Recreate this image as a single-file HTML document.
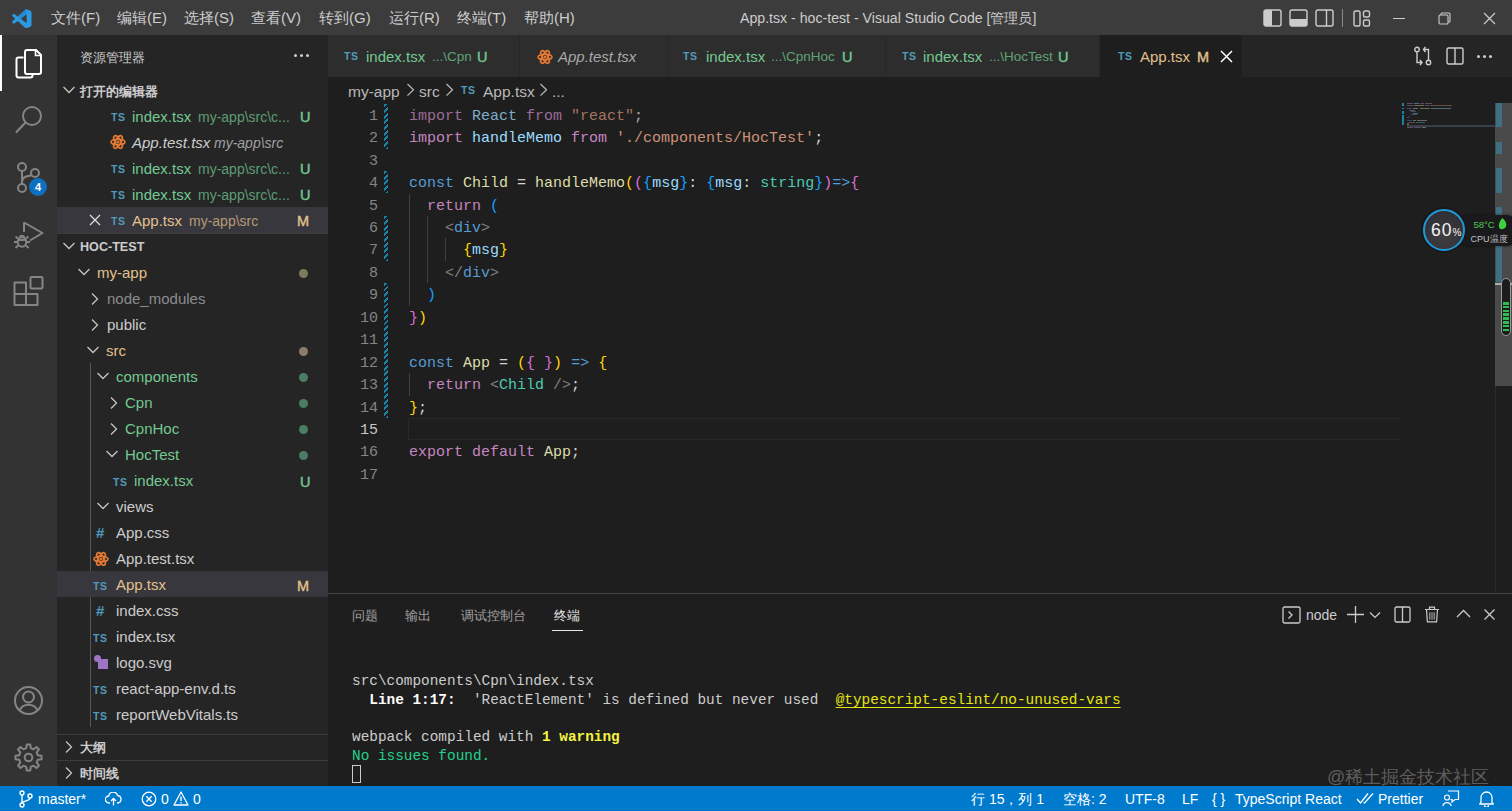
<!DOCTYPE html>
<html><head><meta charset="utf-8">
<style>
*{margin:0;padding:0;box-sizing:border-box}
html,body{width:1512px;height:811px;overflow:hidden;background:#1e1e1e;font-family:"Liberation Sans",sans-serif;color:#cccccc}
.a{position:absolute}
#title{left:0;top:0;width:1512px;height:35px;background:#3c3c3c}
#act{left:0;top:35px;width:57px;height:751px;background:#333333}
#side{left:57px;top:35px;width:271px;height:751px;background:#252526}
#tabs{left:328px;top:35px;width:1184px;height:43px;background:#252526}
#editor{left:328px;top:78px;width:1184px;height:516px;background:#1e1e1e}
#panel{left:328px;top:593px;width:1184px;height:193px;background:#1e1e1e;border-top:1px solid #454545}
#status{left:0;top:786px;width:1512px;height:25px;background:#007acc}
.menu{top:8px;font-size:15px;line-height:20px;white-space:nowrap;color:#cccccc}
.st{font-size:15px;line-height:20px;white-space:nowrap}
.ts{font-size:10.5px;font-weight:bold;color:#519aba;line-height:16px;letter-spacing:.6px}
.hash{font-size:15px;font-weight:bold;color:#519aba;line-height:18px}
.ln{padding-top:2px;left:340px;width:38px;text-align:right;font-size:15px;line-height:22.45px}
.code{padding-top:2px;left:409px;font-size:15px;line-height:22.45px;white-space:pre;color:#d4d4d4}
.gut{width:4px;background:repeating-linear-gradient(-45deg,#1b81a8 0 2px,transparent 2px 4px)}
.term{padding-top:1.5px;left:352px;font-size:14.4px;line-height:18.9px;white-space:pre;color:#cccccc}
.sb{top:789px;font-size:14px;line-height:21px;color:#ffffff;white-space:nowrap}
.mono{font-family:"Liberation Mono",monospace}
</style></head><body>
<div id="title" class="a">
<svg class="a" style="left:12px;top:8.5px" width="19.5" height="19.5" viewBox="0 0 100 100"><path fill="#2b9ae3" fill-rule="evenodd" d="M96.46 10.8 75.86.9C73.47-.25 70.62.24 68.75 2.1L29.34 38.06 12.17 25.03a4.2 4.2 0 0 0-5.35.24L1.3 30.29a4.2 4.2 0 0 0 0 6.2L16.22 50 1.3 63.51a4.2 4.2 0 0 0 0 6.2l5.52 5.02a4.2 4.2 0 0 0 5.35.24l17.17-13.03 39.41 35.96a6.25 6.25 0 0 0 7.11 1.2l20.6-9.92a6.25 6.25 0 0 0 3.54-5.63V16.43a6.25 6.25 0 0 0-3.54-5.63zM75.02 72.7 45.11 50l29.91-22.7z"/><path fill="#1e7fc4" d="M68.75 2.1 29.34 38.06 45.11 50 75.02 27.3V.6c-2-.6-4.6-.2-6.27 1.5z" opacity=".55"/></svg>
<div class="a menu" style="left:51px">文件(F)</div>
<div class="a menu" style="left:117px">编辑(E)</div>
<div class="a menu" style="left:184px">选择(S)</div>
<div class="a menu" style="left:251px">查看(V)</div>
<div class="a menu" style="left:319px">转到(G)</div>
<div class="a menu" style="left:389px">运行(R)</div>
<div class="a menu" style="left:457px">终端(T)</div>
<div class="a menu" style="left:524px">帮助(H)</div>
<div class="a menu" style="left:740px;font-size:14.15px">App.tsx - hoc-test - Visual Studio Code [管理员]</div>
<svg class="a" style="left:1263px;top:9px" width="19" height="18" viewBox="0 0 19 18"><rect x="1" y="1" width="17" height="16" rx="2" fill="none" stroke="#cccccc" stroke-width="1.4"/><rect x="1" y="1" width="8" height="16" rx="1" fill="#cccccc"/></svg>
<svg class="a" style="left:1289px;top:9px" width="19" height="18" viewBox="0 0 19 18"><rect x="1" y="1" width="17" height="16" rx="2" fill="none" stroke="#cccccc" stroke-width="1.4"/><rect x="1" y="10" width="17" height="7" rx="1" fill="#cccccc"/></svg>
<svg class="a" style="left:1315px;top:9px" width="19" height="18" viewBox="0 0 19 18"><rect x="1" y="1" width="17" height="16" rx="2" fill="none" stroke="#cccccc" stroke-width="1.4"/><line x1="11.5" y1="1" x2="11.5" y2="17" stroke="#cccccc" stroke-width="1.4"/></svg>
<div class="a" style="left:1342px;top:9px;width:1px;height:18px;background:#8a8a8a"></div>
<svg class="a" style="left:1353px;top:10px" width="18" height="17" viewBox="0 0 18 17"><rect x="1" y="1" width="6" height="15" rx="1.5" fill="none" stroke="#cccccc" stroke-width="1.4"/><rect x="10.5" y="1" width="6" height="6" rx="1.5" fill="none" stroke="#cccccc" stroke-width="1.4"/><rect x="10.5" y="10" width="6" height="6" rx="1.5" fill="none" stroke="#cccccc" stroke-width="1.4"/></svg>
<div class="a" style="left:1393px;top:18px;width:12px;height:1px;background:#cccccc"></div>
<svg class="a" style="left:1438px;top:12px" width="13" height="13" viewBox="0 0 13 13"><rect x="1" y="3" width="9" height="9" rx="1" fill="none" stroke="#cccccc" stroke-width="1.1"/><path d="M3 3V2a1 1 0 0 1 1-1h7a1 1 0 0 1 1 1v7a1 1 0 0 1-1 1h-1" fill="none" stroke="#cccccc" stroke-width="1.1"/></svg>
<svg class="a" style="left:1483px;top:12px" width="13" height="13" viewBox="0 0 13 13"><path d="M1 1L12 12M12 1L1 12" stroke="#cccccc" stroke-width="1.2"/></svg>
</div>
<div id="act" class="a">
<div class="a" style="left:0;top:0;width:2px;height:56px;background:#ffffff"></div>
<svg class="a" style="left:14px;top:13px" width="29" height="32" viewBox="0 0 29 32"><path d="M9.5 9.5H4.5a2 2 0 0 0-2 2v16a2 2 0 0 0 2 2h12a2 2 0 0 0 2-2v-1" fill="none" stroke="#ffffff" stroke-width="2"/><path d="M11 4a2 2 0 0 1 2-2h9l5 5v17a2 2 0 0 1-2 2H13a2 2 0 0 1-2-2z" fill="none" stroke="#ffffff" stroke-width="2"/><path d="M21.5 2.5v5h5" fill="none" stroke="#ffffff" stroke-width="1.6"/></svg>
<svg class="a" style="left:14px;top:69px" width="30" height="32" viewBox="0 0 30 32"><circle cx="18" cy="12" r="9" fill="none" stroke="#858585" stroke-width="2"/><path d="M11.5 18.5 2 28.5" stroke="#858585" stroke-width="2.2"/></svg>
<svg class="a" style="left:14px;top:125px" width="28" height="34" viewBox="0 0 28 34"><circle cx="8" cy="7" r="4" fill="none" stroke="#858585" stroke-width="2"/><circle cx="21" cy="13" r="4" fill="none" stroke="#858585" stroke-width="2"/><circle cx="8" cy="28" r="4" fill="none" stroke="#858585" stroke-width="2"/><path d="M8 11v13M8 22c0-4 4-6 9-6.5" fill="none" stroke="#858585" stroke-width="2"/></svg>
<div class="a" style="left:29px;top:143px;width:18px;height:18px;border-radius:50%;background:#0e70c0;color:#fff;font-size:11px;font-weight:bold;line-height:18px;text-align:center">4</div>
<svg class="a" style="left:13px;top:183px" width="32" height="32" viewBox="0 0 32 32"><path d="M11 4.5V14M11 4.5 29.5 15 17 22.5" fill="none" stroke="#858585" stroke-width="2" stroke-linejoin="round"/><ellipse cx="9" cy="24" rx="4.3" ry="4.8" fill="none" stroke="#858585" stroke-width="2"/><path d="M4.5 24H1M13.5 24H17M5 20.5 2.5 18.5M13 20.5l2.5-2M5 27.5 2.5 30M13 27.5l2.5 2.5M5.5 22h7M6.5 19a3 3 0 0 1 5 0" fill="none" stroke="#858585" stroke-width="1.8"/></svg>
<svg class="a" style="left:13px;top:239px" width="32" height="34" viewBox="0 0 32 34"><path d="M1.5 8.5H13V31H1.5zM1.5 20H24.5V31H13" fill="none" stroke="#858585" stroke-width="2" stroke-linejoin="round"/><rect x="17.5" y="3" width="12" height="11.5" rx="1" fill="none" stroke="#858585" stroke-width="2"/></svg>
<svg class="a" style="left:13px;top:650px" width="31" height="31" viewBox="0 0 31 31"><circle cx="15.5" cy="15.5" r="13.5" fill="none" stroke="#858585" stroke-width="2"/><circle cx="15.5" cy="12" r="5.5" fill="none" stroke="#858585" stroke-width="2"/><path d="M6.5 25.5a10 10 0 0 1 18 0" fill="none" stroke="#858585" stroke-width="2"/></svg>
<svg class="a" style="left:13px;top:707px" width="31" height="31" viewBox="0 0 31 31"><path fill="none" stroke="#858585" stroke-width="2" stroke-linejoin="round" d="M28.58 13.74 L28.58 17.26 L24.83 17.74 L23.69 20.52 L25.99 23.51 L23.51 25.99 L20.52 23.69 L17.74 24.83 L17.26 28.58 L13.74 28.58 L13.26 24.83 L10.48 23.69 L7.49 25.99 L5.01 23.51 L7.31 20.52 L6.17 17.74 L2.42 17.26 L2.42 13.74 L6.17 13.26 L7.31 10.48 L5.01 7.49 L7.49 5.01 L10.48 7.31 L13.26 6.17 L13.74 2.42 L17.26 2.42 L17.74 6.17 L20.52 7.31 L23.51 5.01 L25.99 7.49 L23.69 10.48 L24.83 13.26Z"/><circle cx="15.5" cy="15.5" r="3.8" fill="none" stroke="#858585" stroke-width="2"/></svg>
</div>
<div id="side">
<div class="a" style="left:57px;top:35px;width:271px;height:751px;background:#252526"></div>
<div class="a st" style="left:80px;top:48px;color:#cccccc;font-size:13.25px">资源管理器</div>
<div class="a" style="left:294px;top:54px;width:3px;height:3px;border-radius:50%;background:#ccc;box-shadow:6px 0 0 #ccc,12px 0 0 #ccc"></div>
<svg class="a" style="left:62px;top:85px" width="14" height="10" viewBox="0 0 14 10"><path d="M1.5 2 7 7.5 12.5 2" fill="none" stroke="#c5c5c5" stroke-width="1.3"/></svg>
<div class="a st" style="left:80px;top:82px;color:#cccccc;font-size:13px;font-weight:bold">打开的编辑器</div>
<div class="a ts" style="left:111px;top:109px">TS</div>
<div class="a st" style="left:132px;top:107px;color:#73c991;">index.tsx</div>
<div class="a st" style="left:198px;top:107px;color:#73c991;opacity:.72;font-size:14px">my-app\src\c...</div>
<div class="a st" style="left:300px;top:107px;color:#73c991;font-weight:normal;font-size:14.5px;-webkit-text-stroke:.4px">U</div>
<svg class="a" style="left:110px;top:134px" width="16" height="16" viewBox="0 0 16 16"><g fill="none" stroke="#e37933" stroke-width="1.6"><ellipse cx="8" cy="8" rx="7" ry="2.8"/><ellipse cx="8" cy="8" rx="7" ry="2.8" transform="rotate(60 8 8)"/><ellipse cx="8" cy="8" rx="7" ry="2.8" transform="rotate(120 8 8)"/></g><circle cx="8" cy="8" r="1.6" fill="#e37933"/></svg>
<div class="a st" style="left:132px;top:133px;color:#cccccc;font-style:italic">App.test.tsx</div>
<div class="a st" style="left:214px;top:133px;color:#a0a0a0;font-style:italic;font-size:14px">my-app\src</div>
<div class="a ts" style="left:111px;top:161px">TS</div>
<div class="a st" style="left:132px;top:159px;color:#73c991;">index.tsx</div>
<div class="a st" style="left:198px;top:159px;color:#73c991;opacity:.72;font-size:14px">my-app\src\c...</div>
<div class="a st" style="left:300px;top:159px;color:#73c991;font-weight:normal;font-size:14.5px;-webkit-text-stroke:.4px">U</div>
<div class="a ts" style="left:111px;top:187px">TS</div>
<div class="a st" style="left:132px;top:185px;color:#73c991;">index.tsx</div>
<div class="a st" style="left:198px;top:185px;color:#73c991;opacity:.72;font-size:14px">my-app\src\c...</div>
<div class="a st" style="left:300px;top:185px;color:#73c991;font-weight:normal;font-size:14.5px;-webkit-text-stroke:.4px">U</div>
<div class="a" style="left:57px;top:207px;width:271px;height:26px;background:#37373d"></div>
<svg class="a" style="left:89px;top:214px" width="12" height="12" viewBox="0 0 12 12"><path d="M1 1 11 11M11 1 1 11" stroke="#dddddd" stroke-width="1.3"/></svg>
<div class="a ts" style="left:111px;top:213px">TS</div>
<div class="a st" style="left:132px;top:211px;color:#e2c08d;">App.tsx</div>
<div class="a st" style="left:189px;top:211px;color:#e2c08d;opacity:.72;font-size:14px">my-app\src</div>
<div class="a st" style="left:297px;top:211px;color:#e2c08d;font-weight:normal;font-size:14.5px;-webkit-text-stroke:.4px">M</div>
<div class="a" style="left:57px;top:233px;width:271px;height:1px;background:#3c3c3c"></div>
<svg class="a" style="left:62px;top:241px" width="14" height="10" viewBox="0 0 14 10"><path d="M1.5 2 7 7.5 12.5 2" fill="none" stroke="#c5c5c5" stroke-width="1.3"/></svg>
<div class="a st" style="left:80px;top:237px;color:#cccccc;font-size:12.6px;font-weight:bold">HOC-TEST</div>
<svg class="a" style="left:77px;top:267px" width="14" height="10" viewBox="0 0 14 10"><path d="M1.5 2 7 7.5 12.5 2" fill="none" stroke="#c5c5c5" stroke-width="1.3"/></svg>
<div class="a st" style="left:97px;top:263px;color:#e2c08d;">my-app</div>
<div class="a" style="left:299px;top:269px;width:9px;height:9px;border-radius:50%;background:#7d7b5c"></div>
<svg class="a" style="left:90px;top:291px" width="10" height="16" viewBox="0 0 10 16"><path d="M2 2.5 7.5 8 2 13.5" fill="none" stroke="#c5c5c5" stroke-width="1.3"/></svg>
<div class="a st" style="left:107px;top:289px;color:#8c8c8c;">node_modules</div>
<svg class="a" style="left:90px;top:317px" width="10" height="16" viewBox="0 0 10 16"><path d="M2 2.5 7.5 8 2 13.5" fill="none" stroke="#c5c5c5" stroke-width="1.3"/></svg>
<div class="a st" style="left:107px;top:315px;color:#cccccc;">public</div>
<svg class="a" style="left:86px;top:345px" width="14" height="10" viewBox="0 0 14 10"><path d="M1.5 2 7 7.5 12.5 2" fill="none" stroke="#c5c5c5" stroke-width="1.3"/></svg>
<div class="a st" style="left:106px;top:341px;color:#e2c08d;">src</div>
<div class="a" style="left:299px;top:347px;width:9px;height:9px;border-radius:50%;background:#8a7d6d"></div>
<div class="a" style="left:90px;top:363px;width:1px;height:364px;background:#585858"></div>
<svg class="a" style="left:96px;top:371px" width="14" height="10" viewBox="0 0 14 10"><path d="M1.5 2 7 7.5 12.5 2" fill="none" stroke="#c5c5c5" stroke-width="1.3"/></svg>
<div class="a st" style="left:116px;top:367px;color:#73c991;">components</div>
<div class="a" style="left:299px;top:373px;width:9px;height:9px;border-radius:50%;background:#4b7d63"></div>
<svg class="a" style="left:109px;top:395px" width="10" height="16" viewBox="0 0 10 16"><path d="M2 2.5 7.5 8 2 13.5" fill="none" stroke="#c5c5c5" stroke-width="1.3"/></svg>
<div class="a st" style="left:125px;top:393px;color:#73c991;">Cpn</div>
<div class="a" style="left:299px;top:399px;width:9px;height:9px;border-radius:50%;background:#4b7d63"></div>
<svg class="a" style="left:109px;top:421px" width="10" height="16" viewBox="0 0 10 16"><path d="M2 2.5 7.5 8 2 13.5" fill="none" stroke="#c5c5c5" stroke-width="1.3"/></svg>
<div class="a st" style="left:125px;top:419px;color:#73c991;">CpnHoc</div>
<div class="a" style="left:299px;top:425px;width:9px;height:9px;border-radius:50%;background:#4b7d63"></div>
<svg class="a" style="left:105px;top:449px" width="14" height="10" viewBox="0 0 14 10"><path d="M1.5 2 7 7.5 12.5 2" fill="none" stroke="#c5c5c5" stroke-width="1.3"/></svg>
<div class="a st" style="left:125px;top:445px;color:#73c991;">HocTest</div>
<div class="a" style="left:299px;top:451px;width:9px;height:9px;border-radius:50%;background:#4b7d63"></div>
<div class="a ts" style="left:113px;top:474px">TS</div>
<div class="a st" style="left:134px;top:471px;color:#73c991;">index.tsx</div>
<div class="a st" style="left:300px;top:472px;color:#73c991;font-weight:normal;font-size:14.5px;-webkit-text-stroke:.4px">U</div>
<svg class="a" style="left:96px;top:501px" width="14" height="10" viewBox="0 0 14 10"><path d="M1.5 2 7 7.5 12.5 2" fill="none" stroke="#c5c5c5" stroke-width="1.3"/></svg>
<div class="a st" style="left:116px;top:497px;color:#cccccc;">views</div>
<div class="a hash" style="left:96px;top:524px">#</div>
<div class="a st" style="left:116px;top:523px;color:#cccccc;">App.css</div>
<svg class="a" style="left:93px;top:551px" width="16" height="16" viewBox="0 0 16 16"><g fill="none" stroke="#e37933" stroke-width="1.6"><ellipse cx="8" cy="8" rx="7" ry="2.8"/><ellipse cx="8" cy="8" rx="7" ry="2.8" transform="rotate(60 8 8)"/><ellipse cx="8" cy="8" rx="7" ry="2.8" transform="rotate(120 8 8)"/></g><circle cx="8" cy="8" r="1.6" fill="#e37933"/></svg>
<div class="a st" style="left:116px;top:549px;color:#cccccc;">App.test.tsx</div>
<div class="a" style="left:57px;top:571px;width:271px;height:26px;background:#37373d"></div>
<div class="a ts" style="left:93px;top:578px">TS</div>
<div class="a st" style="left:116px;top:575px;color:#e2c08d;">App.tsx</div>
<div class="a st" style="left:297px;top:576px;color:#e2c08d;font-weight:normal;font-size:14.5px;-webkit-text-stroke:.4px">M</div>
<div class="a hash" style="left:96px;top:602px">#</div>
<div class="a st" style="left:116px;top:601px;color:#cccccc;">index.css</div>
<div class="a ts" style="left:93px;top:630px">TS</div>
<div class="a st" style="left:116px;top:627px;color:#cccccc;">index.tsx</div>
<svg class="a" style="left:93px;top:654px" width="16" height="16" viewBox="0 0 16 16"><rect x="5" y="5" width="10" height="10" fill="#a074c4"/><circle cx="4.5" cy="4.5" r="3.5" fill="#a074c4"/></svg>
<div class="a st" style="left:116px;top:653px;color:#cccccc;">logo.svg</div>
<div class="a ts" style="left:93px;top:682px">TS</div>
<div class="a st" style="left:116px;top:679px;color:#cccccc;">react-app-env.d.ts</div>
<div class="a ts" style="left:93px;top:708px">TS</div>
<div class="a st" style="left:116px;top:705px;color:#cccccc;">reportWebVitals.ts</div>
<div class="a" style="left:57px;top:734px;width:271px;height:1px;background:#3c3c3c"></div>
<svg class="a" style="left:64px;top:739px" width="10" height="16" viewBox="0 0 10 16"><path d="M2 2.5 7.5 8 2 13.5" fill="none" stroke="#c5c5c5" stroke-width="1.3"/></svg>
<div class="a st" style="left:80px;top:738px;color:#cccccc;font-size:13px;font-weight:bold">大纲</div>
<div class="a" style="left:57px;top:760px;width:271px;height:1px;background:#3c3c3c"></div>
<svg class="a" style="left:64px;top:765px" width="10" height="16" viewBox="0 0 10 16"><path d="M2 2.5 7.5 8 2 13.5" fill="none" stroke="#c5c5c5" stroke-width="1.3"/></svg>
<div class="a st" style="left:80px;top:764px;color:#cccccc;font-size:13px;font-weight:bold">时间线</div>
</div>
<div id="tabsw">
<div class="a" style="left:328px;top:35px;width:1184px;height:42px;background:#252526"></div>
<div class="a" style="left:328px;top:35px;width:192px;height:42px;background:#2d2d2d;border-right:1px solid #282828"></div>
<div class="a" style="left:520px;top:35px;width:148px;height:42px;background:#2d2d2d;border-right:1px solid #282828"></div>
<div class="a" style="left:668px;top:35px;width:218px;height:42px;background:#2d2d2d;border-right:1px solid #282828"></div>
<div class="a" style="left:886px;top:35px;width:214px;height:42px;background:#2d2d2d;border-right:1px solid #282828"></div>
<div class="a" style="left:1100px;top:35px;width:142px;height:43px;background:#1e1e1e"></div>
<div class="a ts" style="left:344px;top:48px">TS</div>
<div class="a st" style="left:366px;top:47px;color:#73c991;">index.tsx</div>
<div class="a st" style="left:432px;top:47px;color:#73c991;font-size:13.5px;opacity:.75">...\Cpn</div>
<div class="a st" style="left:477px;top:47px;color:#73c991;font-weight:normal;font-size:14.5px;-webkit-text-stroke:.4px">U</div>
<svg class="a" style="left:537px;top:49px" width="16" height="16" viewBox="0 0 16 16"><g fill="none" stroke="#e37933" stroke-width="1.6"><ellipse cx="8" cy="8" rx="7" ry="2.8"/><ellipse cx="8" cy="8" rx="7" ry="2.8" transform="rotate(60 8 8)"/><ellipse cx="8" cy="8" rx="7" ry="2.8" transform="rotate(120 8 8)"/></g><circle cx="8" cy="8" r="1.6" fill="#e37933"/></svg>
<div class="a st" style="left:558px;top:47px;color:#a8a8a8;font-style:italic">App.test.tsx</div>
<div class="a ts" style="left:683px;top:48px">TS</div>
<div class="a st" style="left:706px;top:47px;color:#73c991;">index.tsx</div>
<div class="a st" style="left:771px;top:47px;color:#73c991;font-size:13.5px;opacity:.75">...\CpnHoc</div>
<div class="a st" style="left:842px;top:47px;color:#73c991;font-weight:normal;font-size:14.5px;-webkit-text-stroke:.4px">U</div>
<div class="a ts" style="left:902px;top:48px">TS</div>
<div class="a st" style="left:923px;top:47px;color:#73c991;">index.tsx</div>
<div class="a st" style="left:989px;top:47px;color:#73c991;font-size:13.5px;opacity:.75">...\HocTest</div>
<div class="a st" style="left:1058px;top:47px;color:#73c991;font-weight:normal;font-size:14.5px;-webkit-text-stroke:.4px">U</div>
<div class="a ts" style="left:1118px;top:48px">TS</div>
<div class="a st" style="left:1140px;top:47px;color:#e2c08d;">App.tsx</div>
<div class="a st" style="left:1197px;top:47px;color:#e2c08d;font-weight:normal;font-size:14.5px;-webkit-text-stroke:.4px">M</div>
<svg class="a" style="left:1220px;top:50px" width="13" height="13" viewBox="0 0 13 13"><path d="M1 1 12 12M12 1 1 12" stroke="#ffffff" stroke-width="1.5"/></svg>
<svg class="a" style="left:1413px;top:46px" width="20" height="20" viewBox="0 0 20 20"><g fill="none" stroke="#cccccc" stroke-width="1.4"><circle cx="4" cy="3.5" r="2.2"/><circle cx="15.5" cy="16.5" r="2.2"/><path d="M4 5.7V16.5h5M7 14l2 2.5-2 2.5"/><path d="M15.5 14.3V3.5h-5M12.5 1l-2 2.5 2 2.5"/></g></svg>
<svg class="a" style="left:1446px;top:47px" width="18" height="18" viewBox="0 0 18 18"><rect x="1" y="1" width="16" height="16" rx="1.5" fill="none" stroke="#cccccc" stroke-width="1.4"/><line x1="9" y1="1" x2="9" y2="17" stroke="#cccccc" stroke-width="1.4"/></svg>
<div class="a" style="left:1477px;top:55px;width:3px;height:3px;border-radius:50%;background:#ccc;box-shadow:6px 0 0 #ccc,12px 0 0 #ccc"></div>
<div class="a st" style="left:348px;top:81.5px;font-size:15.5px;color:#b8b8b8;">my-app</div>
<svg class="a" style="left:405.5px;top:83px" width="9" height="14" viewBox="0 0 9 14"><path d="M1.5 1 7.5 6.8 1.5 12.6" fill="none" stroke="#bbbbbb" stroke-width="1.2"/></svg>
<div class="a st" style="left:419px;top:81.5px;font-size:15.5px;color:#b8b8b8;">src</div>
<svg class="a" style="left:445px;top:83px" width="9" height="14" viewBox="0 0 9 14"><path d="M1.5 1 7.5 6.8 1.5 12.6" fill="none" stroke="#bbbbbb" stroke-width="1.2"/></svg>
<div class="a ts" style="left:461px;top:82px">TS</div>
<div class="a st" style="left:483px;top:81.5px;font-size:15.5px;color:#b8b8b8;">App.tsx</div>
<svg class="a" style="left:538.5px;top:83px" width="9" height="14" viewBox="0 0 9 14"><path d="M1.5 1 7.5 6.8 1.5 12.6" fill="none" stroke="#bbbbbb" stroke-width="1.2"/></svg>
<div class="a st" style="left:552px;top:81.5px;font-size:15.5px;color:#b8b8b8;">...</div>
</div>
<div id="ed">
<div class="a" style="left:408px;top:418.00px;width:992px;height:22.45px;border:1.5px solid #282828;border-right:none"></div>
<div class="a gut" style="left:384px;top:103.70px;height:44.90px"></div>
<div class="a gut" style="left:384px;top:171.05px;height:22.45px"></div>
<div class="a gut" style="left:384px;top:215.95px;height:44.90px"></div>
<div class="a gut" style="left:384px;top:283.30px;height:134.70px"></div>
<div class="a" style="left:409px;top:193.50px;width:1px;height:112.25px;background:#404040"></div>
<div class="a" style="left:427px;top:215.95px;width:1px;height:67.35px;background:#404040"></div>
<div class="a" style="left:445px;top:238.40px;width:1px;height:22.45px;background:#404040"></div>
<div class="a" style="left:409px;top:373.10px;width:1px;height:22.45px;background:#404040"></div>
<div class="a mono ln" style="top:103.70px;color:#858585">1</div>
<div class="a mono code" style="top:103.70px;opacity:.75;"><span style="color:#c586c0">import</span><span style="color:#d4d4d4"> </span><span style="color:#9cdcfe">React</span><span style="color:#d4d4d4"> </span><span style="color:#c586c0">from</span><span style="color:#d4d4d4"> </span><span style="color:#ce9178">"react"</span><span style="color:#d4d4d4">;</span></div>
<div class="a mono ln" style="top:126.15px;color:#858585">2</div>
<div class="a mono code" style="top:126.15px;"><span style="color:#c586c0">import</span> <span style="color:#9cdcfe">handleMemo</span> <span style="color:#c586c0">from</span> <span style="color:#ce9178">'./components/HocTest'</span><span style="color:#d4d4d4">;</span></div>
<div class="a mono ln" style="top:148.60px;color:#858585">3</div>
<div class="a mono ln" style="top:171.05px;color:#858585">4</div>
<div class="a mono code" style="top:171.05px;"><span style="color:#569cd6">const</span> <span style="color:#dcdcaa">Child</span><span style="color:#d4d4d4"> = </span><span style="color:#dcdcaa">handleMemo</span><span style="color:#ffd700">(</span><span style="color:#da70d6">(</span><span style="color:#179fff">{</span><span style="color:#9cdcfe">msg</span><span style="color:#179fff">}</span><span style="color:#d4d4d4">: </span><span style="color:#179fff">{</span><span style="color:#9cdcfe">msg</span><span style="color:#d4d4d4">: </span><span style="color:#4ec9b0">string</span><span style="color:#179fff">}</span><span style="color:#da70d6">)</span><span style="color:#569cd6">=&gt;</span><span style="color:#da70d6">{</span></div>
<div class="a mono ln" style="top:193.50px;color:#858585">5</div>
<div class="a mono code" style="top:193.50px;">  <span style="color:#c586c0">return</span> <span style="color:#179fff">(</span></div>
<div class="a mono ln" style="top:215.95px;color:#858585">6</div>
<div class="a mono code" style="top:215.95px;">    <span style="color:#808080">&lt;</span><span style="color:#569cd6">div</span><span style="color:#808080">&gt;</span></div>
<div class="a mono ln" style="top:238.40px;color:#858585">7</div>
<div class="a mono code" style="top:238.40px;">      <span style="color:#ffd700">{</span><span style="color:#9cdcfe">msg</span><span style="color:#ffd700">}</span></div>
<div class="a mono ln" style="top:260.85px;color:#858585">8</div>
<div class="a mono code" style="top:260.85px;">    <span style="color:#808080">&lt;/</span><span style="color:#569cd6">div</span><span style="color:#808080">&gt;</span></div>
<div class="a mono ln" style="top:283.30px;color:#858585">9</div>
<div class="a mono code" style="top:283.30px;">  <span style="color:#179fff">)</span></div>
<div class="a mono ln" style="top:305.75px;color:#858585">10</div>
<div class="a mono code" style="top:305.75px;"><span style="color:#da70d6">}</span><span style="color:#ffd700">)</span></div>
<div class="a mono ln" style="top:328.20px;color:#858585">11</div>
<div class="a mono ln" style="top:350.65px;color:#858585">12</div>
<div class="a mono code" style="top:350.65px;"><span style="color:#569cd6">const</span> <span style="color:#dcdcaa">App</span><span style="color:#d4d4d4"> = </span><span style="color:#ffd700">(</span><span style="color:#da70d6">{ }</span><span style="color:#ffd700">)</span> <span style="color:#569cd6">=&gt;</span> <span style="color:#ffd700">{</span></div>
<div class="a mono ln" style="top:373.10px;color:#858585">13</div>
<div class="a mono code" style="top:373.10px;">  <span style="color:#c586c0">return</span> <span style="color:#808080">&lt;</span><span style="color:#4ec9b0">Child</span> <span style="color:#808080">/&gt;</span><span style="color:#d4d4d4">;</span></div>
<div class="a mono ln" style="top:395.55px;color:#858585">14</div>
<div class="a mono code" style="top:395.55px;"><span style="color:#ffd700">}</span><span style="color:#d4d4d4">;</span></div>
<div class="a mono ln" style="top:418.00px;color:#c6c6c6">15</div>
<div class="a mono ln" style="top:440.45px;color:#858585">16</div>
<div class="a mono code" style="top:440.45px;"><span style="color:#c586c0">export</span> <span style="color:#c586c0">default</span> <span style="color:#dcdcaa">App</span><span style="color:#d4d4d4">;</span></div>
<div class="a mono ln" style="top:462.90px;color:#858585">17</div>
</div>
<div id="mm">
<div class="a" style="left:1407px;top:103.30px;width:6px;height:1.1px;background:#c586c0;opacity:.4"></div><div class="a" style="left:1414px;top:103.30px;width:5px;height:1.1px;background:#9cdcfe;opacity:.4"></div><div class="a" style="left:1420px;top:103.30px;width:4px;height:1.1px;background:#c586c0;opacity:.4"></div><div class="a" style="left:1425px;top:103.30px;width:7px;height:1.1px;background:#ce9178;opacity:.4"></div>
<div class="a" style="left:1407px;top:104.85px;width:6px;height:1.1px;background:#c586c0;opacity:.4"></div><div class="a" style="left:1414px;top:104.85px;width:10px;height:1.1px;background:#dcdcaa;opacity:.4"></div><div class="a" style="left:1425px;top:104.85px;width:4px;height:1.1px;background:#c586c0;opacity:.4"></div><div class="a" style="left:1430px;top:104.85px;width:22px;height:1.1px;background:#ce9178;opacity:.4"></div>
<div class="a" style="left:1407px;top:107.95px;width:5px;height:1.1px;background:#569cd6;opacity:.4"></div><div class="a" style="left:1413px;top:107.95px;width:5px;height:1.1px;background:#dcdcaa;opacity:.4"></div><div class="a" style="left:1420px;top:107.95px;width:10px;height:1.1px;background:#dcdcaa;opacity:.4"></div><div class="a" style="left:1431px;top:107.95px;width:20px;height:1.1px;background:#9cdcfe;opacity:.4"></div>
<div class="a" style="left:1409px;top:109.50px;width:6px;height:1.1px;background:#c586c0;opacity:.4"></div>
<div class="a" style="left:1411px;top:111.05px;width:5px;height:1.1px;background:#569cd6;opacity:.4"></div>
<div class="a" style="left:1413px;top:112.60px;width:5px;height:1.1px;background:#9cdcfe;opacity:.4"></div>
<div class="a" style="left:1411px;top:114.15px;width:6px;height:1.1px;background:#569cd6;opacity:.4"></div>
<div class="a" style="left:1409px;top:115.70px;width:1px;height:1.1px;background:#179fff;opacity:.4"></div>
<div class="a" style="left:1407px;top:117.25px;width:2px;height:1.1px;background:#da70d6;opacity:.4"></div>
<div class="a" style="left:1407px;top:120.35px;width:5px;height:1.1px;background:#569cd6;opacity:.4"></div><div class="a" style="left:1413px;top:120.35px;width:3px;height:1.1px;background:#dcdcaa;opacity:.4"></div><div class="a" style="left:1417px;top:120.35px;width:10px;height:1.1px;background:#d4d4d4;opacity:.4"></div>
<div class="a" style="left:1409px;top:121.90px;width:6px;height:1.1px;background:#c586c0;opacity:.4"></div><div class="a" style="left:1416px;top:121.90px;width:9px;height:1.1px;background:#4ec9b0;opacity:.4"></div>
<div class="a" style="left:1407px;top:123.45px;width:2px;height:1.1px;background:#ffd700;opacity:.4"></div>
<div class="a" style="left:1407px;top:126.55px;width:6px;height:1.1px;background:#c586c0;opacity:.4"></div><div class="a" style="left:1414px;top:126.55px;width:7px;height:1.1px;background:#c586c0;opacity:.4"></div><div class="a" style="left:1422px;top:126.55px;width:4px;height:1.1px;background:#dcdcaa;opacity:.4"></div>
<div class="a" style="left:1402px;top:103px;width:2px;height:3px;background:#1b81a8"></div>
<div class="a" style="left:1402px;top:107.6px;width:2px;height:1.6px;background:#1b81a8"></div>
<div class="a" style="left:1402px;top:110.8px;width:2px;height:3.1px;background:#1b81a8"></div>
<div class="a" style="left:1402px;top:115.4px;width:2px;height:9.3px;background:#1b81a8"></div>
<div class="a" style="left:1407px;top:124.8px;width:88px;height:2px;background:#34414d"></div>
<div class="a" style="left:1495px;top:103px;width:1px;height:490px;background:#2b2b2b"></div>
<div class="a" style="left:1495px;top:103px;width:17px;height:283px;background:#4a4a4a"></div>
<div class="a" style="left:1496px;top:103px;width:6px;height:24px;background:#3f6f85"></div>
<div class="a" style="left:1496px;top:142px;width:6px;height:12px;background:#3f6f85"></div>
<div class="a" style="left:1496px;top:168px;width:6px;height:25px;background:#3f6f85"></div>
<div class="a" style="left:1496px;top:207px;width:6px;height:75px;background:#3f6f85"></div>
<div class="a" style="left:1495px;top:283px;width:17px;height:2px;background:#b0b0b0"></div>
<div class="a" style="left:1501px;top:278px;width:10px;height:58px;border-radius:5px;background:#1c1c1c;border:1px solid #9a9a9a"></div>
<div class="a" style="left:1503px;top:302.0px;width:6px;height:2.6px;background:#2ebd4e"></div>
<div class="a" style="left:1503px;top:305.8px;width:6px;height:2.6px;background:#2ebd4e"></div>
<div class="a" style="left:1503px;top:309.6px;width:6px;height:2.6px;background:#2ebd4e"></div>
<div class="a" style="left:1503px;top:313.4px;width:6px;height:2.6px;background:#2ebd4e"></div>
<div class="a" style="left:1503px;top:317.2px;width:6px;height:2.6px;background:#2ebd4e"></div>
<div class="a" style="left:1503px;top:321.0px;width:6px;height:2.6px;background:#2ebd4e"></div>
<div class="a" style="left:1503px;top:324.8px;width:6px;height:2.6px;background:#2ebd4e"></div>
<div class="a" style="left:1503px;top:328.6px;width:6px;height:2.6px;background:#2ebd4e"></div>
<div class="a" style="left:1458px;top:215px;width:60px;height:31px;border-radius:12px;background:#1a1a1c;box-shadow:0 0 3px rgba(0,0,0,.6)"></div>
<div class="a" style="left:1421px;top:207px;width:46px;height:46px;border-radius:50%;background:#18181a"></div>
<div class="a" style="left:1423px;top:209px;width:42px;height:42px;border-radius:50%;border:2.2px solid #1e9ad6;background:radial-gradient(circle at 50% 70%,#3e3e42,#2c2c30)"></div>
<div class="a" style="left:1431px;top:219.5px;font-size:17.5px;line-height:20px;color:#f4f4f4;white-space:nowrap;letter-spacing:1px">60<span style="font-size:10px;letter-spacing:0">%</span></div>
<div class="a" style="left:1473.5px;top:219px;font-size:9.5px;line-height:12px;color:#4ec94e;white-space:nowrap">58°C</div>
<svg class="a" style="left:1498px;top:218px" width="9" height="12" viewBox="0 0 9 12"><path d="M4.5 0C7 2.5 9 5 8 8.5 7 11 4 11.5 2.5 11 0 9 0 5 4.5 0z" fill="#3ed13e"/></svg>
<div class="a" style="left:1470.5px;top:232.5px;font-size:9px;line-height:12px;color:#c0c0c0;white-space:nowrap">CPU温度</div>
</div>
<div id="pnl">
<div class="a" style="left:328px;top:593px;width:1184px;height:1px;background:#454545"></div>
<div class="a" style="left:352px;top:607px;font-size:13px;line-height:18px;color:#a0a0a0;white-space:nowrap">问题</div>
<div class="a" style="left:405px;top:607px;font-size:13px;line-height:18px;color:#a0a0a0;white-space:nowrap">输出</div>
<div class="a" style="left:461px;top:607px;font-size:13px;line-height:18px;color:#a0a0a0;white-space:nowrap">调试控制台</div>
<div class="a" style="left:554px;top:607px;font-size:13px;line-height:18px;color:#e7e7e7;white-space:nowrap">终端</div>
<div class="a" style="left:552px;top:630px;width:31px;height:1px;background:#e7e7e7"></div>
<svg class="a" style="left:1282px;top:606px" width="19" height="18" viewBox="0 0 19 18"><rect x="1" y="1" width="17" height="16" rx="1.5" fill="none" stroke="#cccccc" stroke-width="1.3"/><path d="M6.5 5.5 10 9 6.5 12.5" fill="none" stroke="#cccccc" stroke-width="1.3"/></svg>
<div class="a" style="left:1306px;top:605px;font-size:14px;line-height:20px;color:#cccccc">node</div>
<svg class="a" style="left:1347px;top:606px" width="17" height="17" viewBox="0 0 17 17"><path d="M8.5 0V17M0 8.5H17" stroke="#cccccc" stroke-width="1.3"/></svg>
<svg class="a" style="left:1369px;top:611px" width="12" height="8" viewBox="0 0 12 8"><path d="M1 1.5 6 6.5 11 1.5" fill="none" stroke="#cccccc" stroke-width="1.2"/></svg>
<svg class="a" style="left:1394px;top:606px" width="17" height="17" viewBox="0 0 17 17"><rect x="1" y="1" width="15" height="15" rx="1.5" fill="none" stroke="#cccccc" stroke-width="1.3"/><line x1="8.5" y1="1" x2="8.5" y2="16" stroke="#cccccc" stroke-width="1.3"/></svg>
<svg class="a" style="left:1424px;top:606px" width="16" height="17" viewBox="0 0 16 17"><path d="M1 3.5H15M5.5 3.5V1.2h5v2.3M2.5 3.5l.9 12.3h9.2l.9-12.3" fill="none" stroke="#cccccc" stroke-width="1.2"/><path d="M5.8 6.2v7.5M8 6.2v7.5M10.2 6.2v7.5" stroke="#cccccc" stroke-width=".9"/></svg>
<svg class="a" style="left:1456px;top:609px" width="15" height="9" viewBox="0 0 15 9"><path d="M1 8 7.5 1.5 14 8" fill="none" stroke="#cccccc" stroke-width="1.3"/></svg>
<svg class="a" style="left:1484px;top:609px" width="11" height="11" viewBox="0 0 11 11"><path d="M.5.5 10.5 10.5M10.5.5 .5 10.5" stroke="#cccccc" stroke-width="1.3"/></svg>
<div class="a mono term" style="top:670.25px">src\components\Cpn\index.tsx</div>
<div class="a mono term" style="top:689.15px">  <b style="color:#ffffff">Line 1:17:</b>  'ReactElement' is defined but never used  <span style="color:#e5e510;text-decoration:underline;text-underline-offset:3px">@typescript-eslint/no-unused-vars</span></div>
<div class="a mono term" style="top:726.95px">webpack compiled with <b style="color:#f5f543">1 warning</b></div>
<div class="a mono term" style="top:745.85px"><span style="color:#23d18b">No issues found.</span></div>
<div class="a" style="left:352px;top:765px;width:9px;height:18px;border:1.5px solid #cccccc"></div>
<div class="a" style="left:1327px;top:766px;font-size:18px;line-height:22px;color:rgba(150,150,150,.55);white-space:nowrap">@稀土掘金技术社区</div>
</div>
<div id="status" class="a"></div>
<svg class="a" style="left:19px;top:790px" width="14" height="18" viewBox="0 0 14 18"><g fill="none" stroke="#fff" stroke-width="1.4"><circle cx="3" cy="3" r="2"/><circle cx="3" cy="15" r="2"/><circle cx="11" cy="6" r="2"/><path d="M3 5v8M11 8c0 3-8 3-8 5"/></g></svg>
<div class="a sb" style="left:38px">master*</div>
<svg class="a" style="left:105px;top:792px" width="17" height="14" viewBox="0 0 17 14"><path d="M5 11H4a3.5 3.5 0 0 1-.3-7A4.5 4.5 0 0 1 12.5 3.5 3.8 3.8 0 0 1 13 11h-1" fill="none" stroke="#fff" stroke-width="1.3"/><path d="M8.5 13.5V6.5M6 9l2.5-2.5L11 9" fill="none" stroke="#fff" stroke-width="1.3"/></svg>
<svg class="a" style="left:141px;top:791px" width="16" height="16" viewBox="0 0 16 16"><circle cx="8" cy="8" r="6.8" fill="none" stroke="#fff" stroke-width="1.3"/><path d="M5.3 5.3l5.4 5.4M10.7 5.3l-5.4 5.4" stroke="#fff" stroke-width="1.3"/></svg>
<div class="a sb" style="left:161px">0</div>
<svg class="a" style="left:173px;top:791px" width="16" height="15" viewBox="0 0 16 15"><path d="M8 1 15 14H1z" fill="none" stroke="#fff" stroke-width="1.3" stroke-linejoin="round"/><path d="M8 5.5v4.5M8 11.3v1.3" stroke="#fff" stroke-width="1.4"/></svg>
<div class="a sb" style="left:193px">0</div>
<div class="a sb" style="left:971px">行 15，列 1</div>
<div class="a sb" style="left:1063px">空格: 2</div>
<div class="a sb" style="left:1125px">UTF-8</div>
<div class="a sb" style="left:1182px">LF</div>
<div class="a sb" style="left:1212px">{ }</div>
<div class="a sb" style="left:1235px">TypeScript React</div>
<svg class="a" style="left:1356px;top:792px" width="18" height="13" viewBox="0 0 18 13"><path d="M1 7l3.5 4L12 1.5M7.5 10.5 8.5 11 17 1.5" fill="none" stroke="#fff" stroke-width="1.3"/></svg>
<div class="a sb" style="left:1378px">Prettier</div>
<svg class="a" style="left:1442px;top:790px" width="18" height="17" viewBox="0 0 18 17"><path d="M6 1h10.5v8.5H13L10 12V9.5H8.5" fill="none" stroke="#fff" stroke-width="1.2"/><circle cx="5" cy="7.5" r="2.5" fill="none" stroke="#fff" stroke-width="1.2"/><path d="M.8 16a4.3 4.3 0 0 1 8.4 0" fill="none" stroke="#fff" stroke-width="1.2"/></svg>
<svg class="a" style="left:1479px;top:790px" width="15" height="17" viewBox="0 0 15 17"><path d="M2 12.5V7.5a5.5 5.5 0 0 1 11 0v5l1.3 1.5H.7z" fill="none" stroke="#fff" stroke-width="1.3" stroke-linejoin="round"/><path d="M5.5 15.3a2 2 0 0 0 4 0" fill="none" stroke="#fff" stroke-width="1.3"/></svg>
</body></html>
